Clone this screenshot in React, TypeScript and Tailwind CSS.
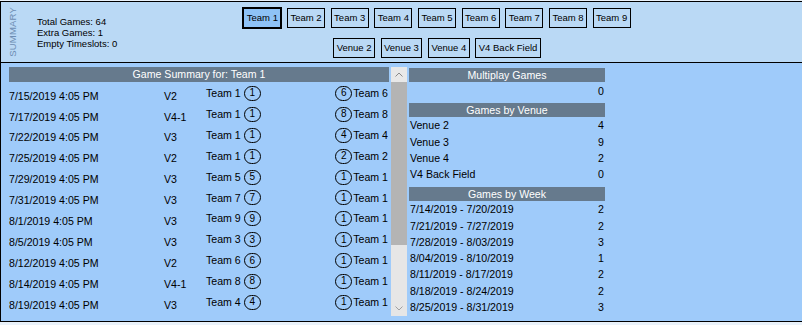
import React from "react";

const games: [string, string, string, string, string, string][] = [
  ["7/15/2019 4:05 PM", "V2", "Team 1", "1", "6", "Team 6"],
  ["7/17/2019 4:05 PM", "V4-1", "Team 1", "1", "8", "Team 8"],
  ["7/22/2019 4:05 PM", "V3", "Team 1", "1", "4", "Team 4"],
  ["7/25/2019 4:05 PM", "V2", "Team 1", "1", "2", "Team 2"],
  ["7/29/2019 4:05 PM", "V3", "Team 5", "5", "1", "Team 1"],
  ["7/31/2019 4:05 PM", "V3", "Team 7", "7", "1", "Team 1"],
  ["8/1/2019 4:05 PM", "V3", "Team 9", "9", "1", "Team 1"],
  ["8/5/2019 4:05 PM", "V3", "Team 3", "3", "1", "Team 1"],
  ["8/12/2019 4:05 PM", "V2", "Team 6", "6", "1", "Team 1"],
  ["8/14/2019 4:05 PM", "V4-1", "Team 8", "8", "1", "Team 1"],
  ["8/19/2019 4:05 PM", "V3", "Team 4", "4", "1", "Team 1"],
];

const venues: [string, string][] = [
  ["Venue 2", "4"],
  ["Venue 3", "9"],
  ["Venue 4", "2"],
  ["V4 Back Field", "0"],
];

const weeks: [string, string][] = [
  ["7/14/2019 - 7/20/2019", "2"],
  ["7/21/2019 - 7/27/2019", "2"],
  ["7/28/2019 - 8/03/2019", "3"],
  ["8/04/2019 - 8/10/2019", "1"],
  ["8/11/2019 - 8/17/2019", "2"],
  ["8/18/2019 - 8/24/2019", "2"],
  ["8/25/2019 - 8/31/2019", "3"],
];

const teams = ["Team 1", "Team 2", "Team 3", "Team 4", "Team 5", "Team 6", "Team 7", "Team 8", "Team 9"];
const venueBtns = ["Venue 2", "Venue 3", "Venue 4", "V4 Back Field"];

function Btn({ label, selected }: { label: string; selected?: boolean }) {
  return (
    <div
      className={
        "h-[20px] px-[2.5px] flex items-center border border-black leading-none whitespace-nowrap " +
        (selected ? "bg-[#8ec2f6] outline outline-1 outline-black" : "")
      }
    >
      {label}
    </div>
  );
}

function Circle({ n }: { n: string }) {
  return (
    <div className="w-[17px] h-[15px] rounded-full border border-black flex items-center justify-center text-[10px] leading-none">
      {n}
    </div>
  );
}

function Header({ title, tall }: { title: string; tall?: boolean }) {
  return (
    <div
      className={
        "bg-[#667a8d] text-white flex items-center justify-center leading-none " +
        (tall ? "h-[15px]" : "h-[14px]")
      }
    >
      {title}
    </div>
  );
}

export default function App() {
  return (
    <div className="w-[802px] h-[325px] bg-[#eaf2fa] pt-[1px] font-['Liberation_Sans',Arial,sans-serif] text-black overflow-hidden">
      <div className="border-t border-b border-l border-black">
        {/* top summary */}
        <div className="h-[60px] bg-[#bad9f5] flex items-center text-[9.5px]">
          <div className="ml-[6px] w-[11px] flex items-center justify-center">
            <span className="[writing-mode:vertical-rl] rotate-180 text-[9.5px] leading-[11px] text-[#6d8db2] tracking-[0.2px]">
              SUMMARY
            </span>
          </div>
          <div className="ml-[19px] w-[84px] leading-[11px] whitespace-nowrap">
            <div>Total Games: 64</div>
            <div>Extra Games: 1</div>
            <div>Empty Timeslots: 0</div>
          </div>
          <div className="w-[632px] h-full flex flex-col items-center pt-[6px] gap-[10px]">
            <div className="flex gap-[5.5px]">
              {teams.map((t, i) => (
                <Btn key={t} label={t} selected={i === 0} />
              ))}
            </div>
            <div className="flex gap-[5.5px]">
              {venueBtns.map((t) => (
                <Btn key={t} label={t} />
              ))}
            </div>
          </div>
        </div>
        {/* lower */}
        <div className="h-[259px] border-t border-black bg-[#9fcbfa] flex items-start pl-[8px] pt-[4px] text-[10.6px]">
          {/* game table */}
          <div className="w-[380px]">
            <Header title="Game Summary for: Team 1" tall />
            {games.map((g, i) => (
              <div key={i} className="h-[20.9px] flex items-center whitespace-nowrap">
                <div className="w-[155px] pt-[7px] leading-none">{g[0]}</div>
                <div className="w-[42px] pt-[7px] leading-none">{g[1]}</div>
                <div className="flex items-center gap-[3px] pt-[2px]">
                  <span className="leading-none">{g[2]}</span>
                  <Circle n={g[3]} />
                </div>
                <div className="flex-1" />
                <div className="flex items-center gap-[1px] pt-[2px] pr-[1px]">
                  <Circle n={g[4]} />
                  <span className="leading-none">{g[5]}</span>
                </div>
              </div>
            ))}
          </div>
          {/* scrollbar */}
          <div className="ml-[2px] w-[16px] h-[249px] bg-[#e6e6e6] flex flex-col">
            <div className="h-[15px] bg-[#e8e8e8] flex items-center justify-center">
              <svg width="8" height="5" viewBox="0 0 8 5">
                <path d="M0.5 4.5 L4 1 L7.5 4.5" fill="none" stroke="#8a8a8a" strokeWidth="1" />
              </svg>
            </div>
            <div className="h-[163px] bg-[#b4b4b4]" />
            <div className="flex-1 flex items-end justify-center pb-[5px]">
              <svg width="8" height="5" viewBox="0 0 8 5">
                <path d="M0.5 0.5 L4 4 L7.5 0.5" fill="none" stroke="#a0a0a0" strokeWidth="1" />
              </svg>
            </div>
          </div>
          {/* right panel */}
          <div className="ml-[2px] w-[196px] pt-[1px] flex flex-col gap-[4.7px]">
            <div>
              <Header title="Multiplay Games" />
              <div className="h-[16.3px] flex items-center justify-end pr-[1px] pt-[2px] leading-none">0</div>
            </div>
            <div>
              <Header title="Games by Venue" />
              {venues.map(([l, v]) => (
                <div key={l} className="h-[16.3px] flex items-center justify-between px-[1px] pt-[1px] leading-none">
                  <span>{l}</span>
                  <span>{v}</span>
                </div>
              ))}
            </div>
            <div>
              <Header title="Games by Week" />
              {weeks.map(([l, v]) => (
                <div key={l} className="h-[16.3px] flex items-center justify-between px-[1px] pt-[1px] leading-none">
                  <span>{l}</span>
                  <span>{v}</span>
                </div>
              ))}
            </div>
          </div>
        </div>
      </div>
    </div>
  );
}
